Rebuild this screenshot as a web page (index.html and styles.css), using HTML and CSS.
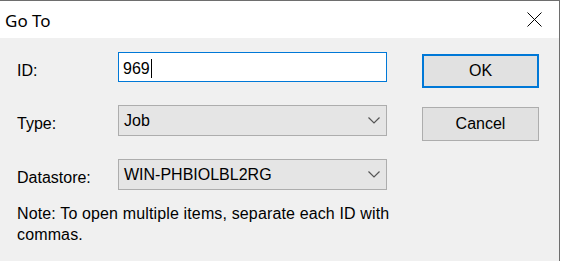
FILE: index.html
```html
<!DOCTYPE html>
<html>
<head>
<meta charset="utf-8">
<link rel="stylesheet" href="styles.css">
</head>
<body>
<div class="window">
  <div class="titlebar">
    <span class="title">Go To</span>
    <svg class="close" width="15" height="15" viewBox="0 0 15 15"><path d="M0.5 0.5 L14.5 14.5 M14.5 0.5 L0.5 14.5" stroke="#000" stroke-width="1" fill="none"/></svg>
  </div>
  <div class="content">
    <div class="form">
      <div class="row">
        <label class="label">ID:</label>
        <div class="textbox">969<span class="caret"></span></div>
      </div>
      <div class="row">
        <label class="label">Type:</label>
        <div class="combo"><span>Job</span><svg class="chev" width="12" height="7" viewBox="0 0 12 7"><path d="M0.5 0.5 L6 6 L11.5 0.5" stroke="#555" stroke-width="1.2" fill="none"/></svg></div>
      </div>
      <div class="row">
        <label class="label">Datastore:</label>
        <div class="combo"><span>WIN-PHBIOLBL2RG</span><svg class="chev" width="12" height="7" viewBox="0 0 12 7"><path d="M0.5 0.5 L6 6 L11.5 0.5" stroke="#555" stroke-width="1.2" fill="none"/></svg></div>
      </div>
      <p class="note">Note: To open multiple items, separate each ID with commas.</p>
    </div>
    <div class="buttons">
      <button class="btn btn-default">OK</button>
      <button class="btn">Cancel</button>
    </div>
  </div>
</div>
</body>
</html>
```
FILE: styles.css
```css
html, body {
  margin: 0;
  padding: 0;
  background: #ffffff;
}
body {
  font-family: "Liberation Sans", Arial, sans-serif;
  font-size: 16px;
  color: #000;
}
.window {
  width: 560px;
  height: 261px;
  border-top: 1px solid #6e6e6e;
  border-right: 1px solid #6e6e6e;
  background: #f0f0f0;
  box-sizing: border-box;
}
.titlebar {
  height: 37px;
  background: #fff;
  display: flex;
  align-items: center;
  justify-content: space-between;
  padding: 0 17px 0 5px;
}
.title {
  font-family: "Noto Sans", "Open Sans", sans-serif;
  font-size: 17px;
  color: #000;
  margin-top: 1px;
}
.close {
  display: block;
}
.content {
  display: flex;
  padding: 14px 0 0 17px;
}
.form {
  display: flex;
  flex-direction: column;
  width: 370px;
}
.row {
  display: flex;
  align-items: flex-start;
  margin-bottom: 23px;
}
.label {
  width: 101px;
  padding-top: 10px;
  line-height: 18px;
}
.textbox {
  width: 269px;
  height: 30px;
  box-sizing: border-box;
  border: 1px solid #0078d7;
  background: #fff;
  padding: 3px 0 0 4px;
  line-height: 20px;
  display: flex;
  align-items: center;
}
.caret {
  display: inline-block;
  width: 1px;
  height: 19px;
  background: #000;
  margin-left: 1px;
}
.combo {
  width: 269px;
  height: 31px;
  box-sizing: border-box;
  border: 1px solid #adadad;
  background: #e5e5e5;
  display: flex;
  align-items: center;
  justify-content: space-between;
  padding: 0 6px 0 5px;
}
.combo span {
  line-height: 20px;
}
.chev {
  display: block;
}
.note {
  margin: -10px 0 0 0;
  line-height: 21px;
  width: 385px;
  letter-spacing: 0.14px;
}
.buttons {
  display: flex;
  flex-direction: column;
  gap: 19px;
  margin-left: 35px;
  padding-top: 2px;
}
.btn {
  width: 117px;
  height: 34px;
  box-sizing: border-box;
  font-family: "Liberation Sans", Arial, sans-serif;
  font-size: 16px;
  color: #000;
  background: #e1e1e1;
  border: 1px solid #adadad;
  padding: 0;
}
.btn-default {
  border: 2px solid #0078d7;
}
```
